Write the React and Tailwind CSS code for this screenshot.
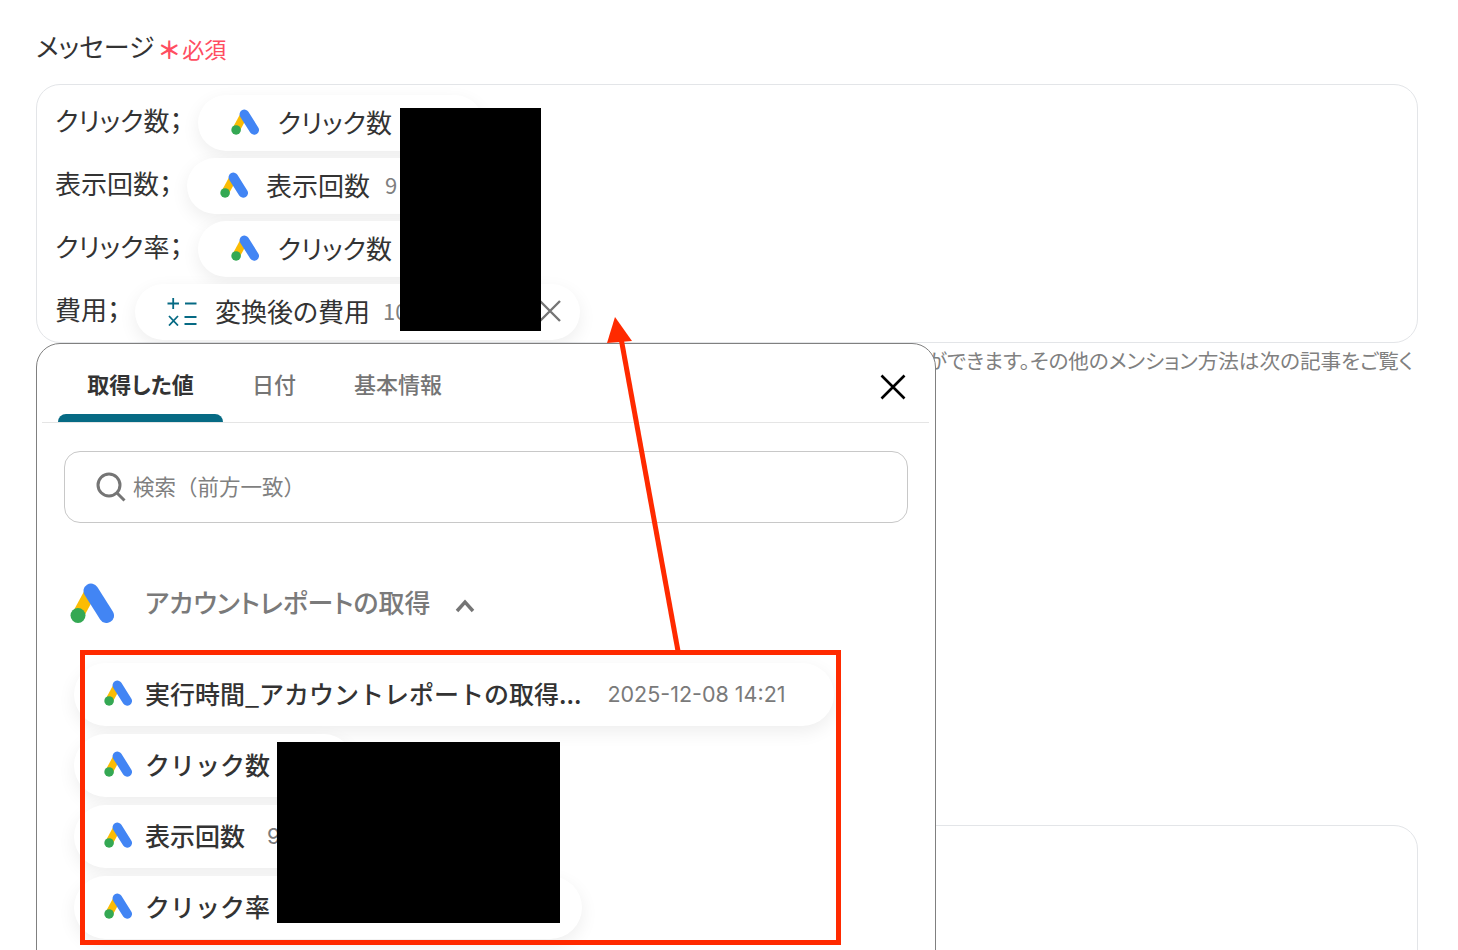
import React from 'react';

function AdsLogo({ className }) {
    return (
        <svg viewBox="0 0 44 40" className={className}>
            <path d="M21 8 L8 32" stroke="#fbbc04" strokeWidth="12" fill="none" />
            <path d="M21 8 L36.5 32.5" stroke="#4285f4" strokeWidth="15" strokeLinecap="round" fill="none" />
            <circle cx="8" cy="32.5" r="7.5" fill="#34a853" />
        </svg>
    );
}

function CalcIcon() {
    return (
        <svg viewBox="0 0 30 30" className="w-[30px] h-[30px] shrink-0" stroke="#066a84" strokeWidth="1.8" fill="none">
            <path d="M0.5 7.5H12M6.2 2V13M18 7.5H29.5" />
            <path d="M2 20L11 29.5M11 20L2 29.5M17.5 21H29.5M17.5 28H29.5" />
        </svg>
    );
}

const messageRows = [
    { label: "クリック数；", chip: "クリック数", chipClass: "ml-[16px] w-[285px]" },
    { label: "表示回数；", chip: "表示回数", value: "9", chipClass: "ml-[15px] w-[296px]" },
    { label: "クリック率；", chip: "クリック数", chipClass: "ml-[16px] w-[285px]" },
];

const outputRows = [
    { name: "実行時間_アカウントレポートの取得...", value: "2025-12-08 14:21", widthClass: "w-[760px]", valueClass: "ml-[26px] mt-[3px]" },
    { name: "クリック数", widthClass: "w-[281px]" },
    { name: "表示回数", value: "9", widthClass: "w-[400px]", valueClass: "ml-[22px] mt-[3px]" },
    { name: "クリック率", widthClass: "w-[508px]" },
];

const chipClass = "h-[56px] pb-[3px] rounded-full bg-white shadow-[0_6px_18px_rgba(0,0,0,0.07)] flex items-center shrink-0";

export default function App() {
    return (
        <div className="relative w-[1458px] h-[950px] overflow-hidden bg-white text-[#333] font-['Noto_Sans_CJK_JP',sans-serif] [font-feature-settings:'palt']">
            {/* Form behind the popup */}
            <div className="flex flex-col pl-[36px] pr-[40px] pt-[27px]">
                <div className="flex items-center h-[38px]">
                    <span className="text-[26px] leading-none">メッセージ</span>
                    <span className="ml-[5px] mt-[6px] text-[24px] leading-none font-bold text-[#ff4d61]">＊</span>
                    <span className="ml-[3px] mt-[3px] text-[22px] leading-none text-[#ff4d61]">必須</span>
                </div>

                <div className="mt-[19px] h-[259px] rounded-[24px] border border-[#e3e5e8] pl-[18px] pt-[10px] flex flex-col gap-[7px]">
                    {messageRows.map((row) => (
                        <div key={row.label} className="flex items-center">
                            <span className="text-[26px] leading-none mb-[7px]">{row.label}</span>
                            <div className={`${chipClass} ${row.chipClass} pl-[33px]`}>
                                <AdsLogo className="w-[28px] h-[26px] shrink-0" />
                                <span className="ml-[18px] text-[26px] leading-none">{row.chip}</span>
                                {row.value && <span className="ml-[15px] text-[22px] text-[#808080]">{row.value}</span>}
                            </div>
                        </div>
                    ))}
                    <div className="flex items-center">
                        <span className="text-[26px] leading-none mb-[7px]">費用；</span>
                        <div className={`${chipClass} ml-[15px] w-[445px] pl-[32px] pr-[18px]`}>
                            <CalcIcon />
                            <span className="ml-[18px] text-[26px] leading-none">変換後の費用</span>
                            <span className="ml-[13px] text-[22px] text-[#808080]">10</span>
                            <svg viewBox="0 0 24 24" className="ml-auto w-[24px] h-[24px]" stroke="#757575" strokeWidth="2.4" fill="none">
                                <path d="M2 2L22 22M22 2L2 22" />
                            </svg>
                        </div>
                    </div>
                </div>

                <div className="ml-[896px] mt-[3px] h-[28px] flex justify-end whitespace-nowrap text-[20.6px] leading-[28px] text-[#808080] pr-[5px]">
                    ができます。その他のメンション方法は次の記事をご覧く
                </div>

                <div className="mt-[451px] h-[180px] rounded-[24px] border border-[#e3e5e8]" />
            </div>

            {/* Value picker popup */}
            <div className="absolute left-[36px] top-[343px] w-[900px] h-[640px] rounded-t-[24px] bg-white border border-[#808080]">
                <div className="ml-[5px] mr-[6px] h-[79px] border-b border-[#e5e5e5] flex items-end pl-[16px] pr-[23px]">
                    <div className="w-[165px] h-[78px] flex flex-col items-center justify-between">
                        <span className="pt-[23px] text-[22px] leading-[32px] font-bold text-[#333]">取得した値</span>
                        <div className="w-full h-[8px] rounded-t-[8px] bg-[#066a84]" />
                    </div>
                    <span className="self-start mt-[23px] px-[29px] text-[22px] leading-[32px] font-medium text-[#757575]">日付</span>
                    <span className="self-start mt-[23px] px-[29px] text-[22px] leading-[32px] font-medium text-[#757575]">基本情報</span>
                    <svg viewBox="0 0 26 26" className="ml-auto self-start mt-[30px] w-[26px] h-[26px]" stroke="#000" strokeWidth="2.6" fill="none">
                        <path d="M1.5 1.5L24.5 24.5M24.5 1.5L1.5 24.5" />
                    </svg>
                </div>

                <div className="ml-[27px] mt-[28px] w-[844px] h-[72px] rounded-[16px] border border-[#c8c8c8] flex items-center pl-[31px]">
                    <svg viewBox="0 0 30 30" className="w-[30px] h-[30px]" stroke="#757575" strokeWidth="3" fill="none">
                        <circle cx="13" cy="13" r="11" />
                        <path d="M21 21L28.5 28.5" />
                    </svg>
                    <span className="ml-[7px] mb-[2px] text-[21.5px] leading-none text-[#808080] [font-feature-settings:normal]">検索（前方一致）</span>
                </div>

                <div className="ml-[33px] mt-[60px] h-[40px] flex items-center">
                    <AdsLogo className="w-[44px] h-[40px]" />
                    <span className="ml-[31px] mb-[3px] text-[26px] leading-none font-medium text-[#7a7a7a]">アカウントレポートの取得</span>
                    <svg viewBox="0 0 20 14" className="ml-[25px] mt-[5px] w-[20px] h-[14px]" stroke="#757575" strokeWidth="3.4" fill="none">
                        <path d="M2 12L10 3L18 12" />
                    </svg>
                </div>

                <div className="ml-[37px] mt-[40px] flex flex-col gap-[8px]">
                    {outputRows.map((row) => (
                        <div key={row.name} className={`${row.widthClass} h-[63px] pb-[3px] rounded-full bg-white shadow-[0_6px_18px_rgba(0,0,0,0.07)] flex items-center pl-[30px] [font-feature-settings:normal]`}>
                            <AdsLogo className="w-[28px] h-[26px] shrink-0" />
                            <span className="ml-[13px] text-[25px] leading-none font-medium text-[#333]">{row.name}</span>
                            {row.value && <span className={`${row.valueClass} text-[21.5px] leading-none text-[#7a7a7a] font-['Inter',sans-serif]`}>{row.value}</span>}
                        </div>
                    ))}
                </div>
            </div>

            {/* Redactions and annotations on top of the screenshot */}
            <div className="absolute left-[400px] top-[108px] w-[141px] h-[223px] bg-black" />
            <div className="absolute left-[277px] top-[742px] w-[283px] h-[181px] bg-black" />
            <div className="absolute left-[80px] top-[650px] w-[761px] h-[295px] border-[5px] border-[#ff2a00]" />
            <svg className="absolute left-0 top-0 w-[1458px] h-[950px] pointer-events-none" viewBox="0 0 1458 950">
                <path d="M678 651L621 338" stroke="#ff2a00" strokeWidth="5" fill="none" />
                <path d="M615 317L607 343L632 341Z" fill="#ff2a00" />
            </svg>
        </div>
    );
}
